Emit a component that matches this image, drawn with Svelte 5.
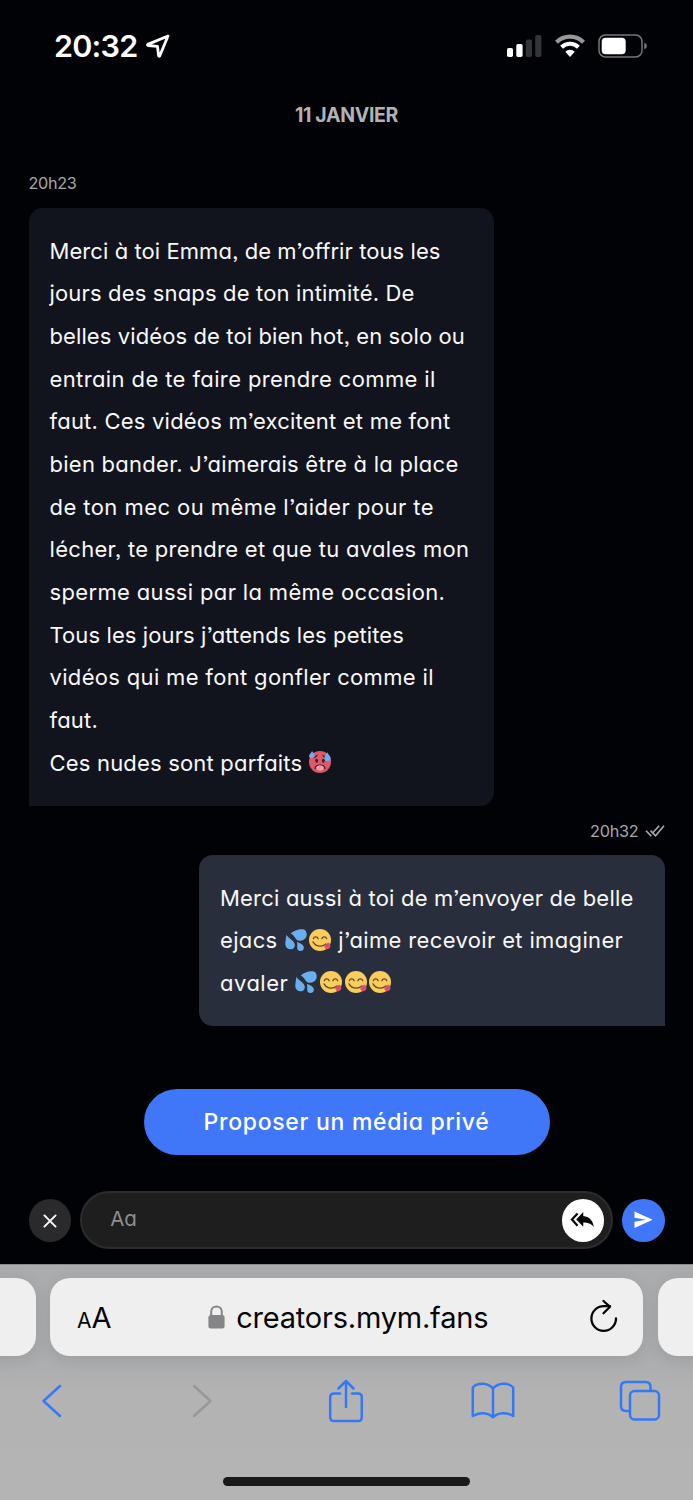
<script>
  const received = [
    [{ t: 'Merci à toi Emma, de m’offrir tous les', w: 391 }],
    [{ t: 'jours des snaps de ton intimité. De', w: 365 }],
    [{ t: 'belles vidéos de toi bien hot, en solo ou', w: 415.5 }],
    [{ t: 'entrain de te faire prendre comme il', w: 386.3 }],
    [{ t: 'faut. Ces vidéos m’excitent et me font', w: 400.8 }],
    [{ t: 'bien bander. J’aimerais être à la place', w: 409 }],
    [{ t: 'de ton mec ou même l’aider pour te', w: 384.5 }],
    [{ t: 'lécher, te prendre et que tu avales mon', w: 419.8 }],
    [{ t: 'sperme aussi par la même occasion.', w: 395.8 }],
    [{ t: 'Tous les jours j’attends les petites', w: 354.5 }],
    [{ t: 'vidéos qui me font gonfler comme il', w: 384.3 }],
    [{ t: 'faut.', w: 48.5 }],
    [{ t: 'Ces nudes sont parfaits', w: 252.8 }, { e: ['hot'] }]
  ];

  const sent = [
    [{ t: 'Merci aussi à toi de m’envoyer de belle', w: 413.5 }],
    [{ t: 'ejacs', w: 57.5 }, { e: ['drops', 'yum'] }, { t: 'j’aime recevoir et imaginer', w: 285 }],
    [{ t: 'avaler', w: 68.3 }, { e: ['drops', 'yum', 'yum', 'yum'] }]
  ];

  // Spreads the tracking so that a run of text takes the given width.
  function fit(node, width) {
    const apply = () => {
      node.style.letterSpacing = '0px';
      const natural = node.getBoundingClientRect().width;
      node.style.letterSpacing = (width - natural) / node.textContent.length + 'px';
    };
    apply();
    document.fonts?.ready.then(apply);
  }
</script>

{#snippet emoji(kind)}
  <svg class="emoji" viewBox="0 0 36 36" aria-hidden="true">
    {#if kind === 'yum'}
      <circle cx="18" cy="18" r="18" fill="#f9cd5c" />
      <path d="M7 16c1.500-4 6.500-4 8 0M21 16c1.500-4 6.500-4 8 0M6.500 21c5 8.500 15 9 21 3.500" fill="none" stroke="#66471b" stroke-width="2" stroke-linecap="round" />
      <path d="M24.500 26.500l7-4.500c4 2 5 7 1.500 10-3 2.600-7.600 1.500-8.500-5.500z" fill="#dd5468" />
      <path d="M28 25l2.500 4" stroke="#b93c50" stroke-width="1.200" />
    {:else if kind === 'drops'}
      <path d="M9.500 7.500C14 2 24-.5 30 .5c5 1 7 8 4.500 13-3 6-11.500 7.500-16 3.500C15.500 14 14.500 9.500 9.500 7.500z" fill="#6aaeed" />
      <path d="M2.200 9.500c3.500 6 11.500 9 13.500 14.500 1.600 5-2 9.500-7 9.300C3 33 0 28.500.5 23c.4-4.500 1.200-8 1.700-13.500z" fill="#6aaeed" />
      <path d="M19.500 21c4 2.500 10.500 3.500 11.300 9 .5 3.500-2 6-5.300 6-4.500-.2-6-3.500-5.500-7.500.2-2.500.3-5-.5-7.500z" fill="#6aaeed" />
    {:else}
      <circle cx="18" cy="18" r="18" fill="#dc5969" />
      <path d="M8 11c2-1 4-2 5-4M28 11c-2-1-4-2-5-4" fill="none" stroke="#4b1624" stroke-width="2" stroke-linecap="round" />
      <ellipse cx="12.500" cy="16" rx="2.300" ry="3.300" fill="#4b1624" />
      <ellipse cx="23.500" cy="16" rx="2.300" ry="3.300" fill="#4b1624" />
      <path d="M10 29c0-8 16-8 16 0" fill="none" stroke="#4b1624" stroke-width="2" stroke-linecap="round" />
      <path d="M12 26.500c1.500-4.500 10.500-4.500 12 0v2.500c-2 4-10 4-12 0z" fill="#f2a0ae" />
      <path d="M18 25v4" stroke="#cc7385" stroke-width="1.200" />
      <path d="M5 0c3 4 5 6 4 9.500-2 3.500-8 3-9-.5C-.5 6 4 3 5 0zM30 2c-3 4-5 7-4.500 11 1.500 5.500 9 5 10 0 .5-4-3.500-6-5.500-11z" fill="#6aaeed" />
    {/if}
  </svg>
{/snippet}

{#snippet message(lines)}
  {#each lines as line}
    <p class="line">
      {#each line as part}
        {#if part.t}
          <span class="run" use:fit={part.w}>{part.t}</span>
        {:else}
          <span class="emojis">{#each part.e as kind}{@render emoji(kind)}{/each}</span>
        {/if}
      {/each}
    </p>
  {/each}
{/snippet}

<div class="phone">
  <header class="status">
    <div class="clock">
      <span class="run" use:fit={83.500}>20:32</span>
      <svg width="24" height="24" viewBox="0 0 24 24" fill="none" stroke="#fff" stroke-width="2.800" stroke-linejoin="round"><path d="M22 2L1.800 10.400q-.8.900.4 1.100l9.300.8 1.100 9.500q.4 1 1.200 0z" /></svg>
    </div>
    <div class="signals">
      <svg width="36" height="24" viewBox="0 0 36 24">
        <rect x="0" y="14" width="6" height="9" rx="1.700" fill="#fff" />
        <rect x="9.300" y="10" width="6.300" height="13" rx="1.700" fill="#fff" />
        <rect x="18.800" y="5.500" width="6.200" height="17.500" rx="1.700" fill="#343438" />
        <rect x="28.200" y="1" width="6.200" height="22" rx="1.700" fill="#343438" />
      </svg>
      <svg class="wifi" width="30" height="24" viewBox="0 0 30 24" fill="none">
        <path d="M1.500 8.200a19 19 0 0 1 27 0" stroke="#98989b" stroke-width="4.200" />
        <path d="M6.600 13.300a12 12 0 0 1 16.800 0" stroke="#fff" stroke-width="4" />
        <path d="M10.300 17.700a6.800 6.800 0 0 1 9.400 0L15 23z" fill="#fff" />
      </svg>
      <svg class="battery" width="50" height="24" viewBox="0 0 50 24">
        <rect x="1" y="1" width="43" height="22" rx="6.500" fill="none" stroke="#77777a" stroke-width="1.500" />
        <rect x="3.700" y="3.700" width="24" height="16.600" rx="4" fill="#fff" />
        <path d="M46.300 8.500q2.600 1 2.600 3.500t-2.600 3.500z" fill="#77777a" />
      </svg>
    </div>
  </header>

  <main class="chat">
    <h1 class="day"><span class="run" use:fit={103}>11 JANVIER</span></h1>

    <div class="stamp first"><span class="run" use:fit={48}>20h23</span></div>
    <section class="bubble incoming">{@render message(received)}</section>

    <div class="stamp own">
      <span class="run" use:fit={48.500}>20h32</span>
      <svg width="20" height="14" viewBox="0 0 20 14" fill="none" stroke="#a9a9ab" stroke-width="1.600"><path d="M1 6.800l5.300 5.300M5.500 6.600l5 5.200L19 1.800M8 8.500L14.200 1.800" /></svg>
    </div>
    <section class="bubble outgoing">{@render message(sent)}</section>

    <button class="offer"><span class="run" use:fit={286}>Proposer un média privé</span></button>

    <form class="composer">
      <button class="round close" type="button" aria-label="Fermer">
        <svg width="14" height="14" viewBox="0 0 14 14" stroke="#fff" stroke-width="1.900" stroke-linecap="round"><path d="M1.400 1.400l11.200 11.200M12.600 1.400L1.400 12.600" /></svg>
      </button>
      <div class="field">
        <span class="run" use:fit={26.500}>Aa</span>
        <button class="round replies" type="button" aria-label="Réponses">
          <svg width="25" height="17" viewBox="0 0 26 18"><path d="M7.800 1.500L1.800 8l6 6.500" fill="none" stroke="#050505" stroke-width="2.300" /><path d="M13.800 0v4.300c6.300.7 10.200 4.500 11.200 11.500-3.100-3.800-6.400-4.800-11.200-4.800v4.500L6.300 8z" fill="#050505" /></svg>
        </button>
      </div>
      <button class="round send" type="button" aria-label="Envoyer">
        <svg width="19" height="18" viewBox="0 0 19 18"><path d="M.5.500L18.700 8.700.5 17v-6.300l11.500-2L.5 6.700z" fill="#fff" /></svg>
      </button>
    </form>
  </main>

  <footer class="browser">
    <div class="tabs">
      <div class="tab side"></div>
      <div class="tab address">
        <span class="size"><span class="small">A</span><span>A</span></span>
        <div class="site">
          <svg width="17" height="24" viewBox="0 0 17 24"><path d="M3.200 11V6.700c0-7 10.600-7 10.600 0V11" fill="none" stroke="#858489" stroke-width="2" /><rect x=".4" y="10" width="16.200" height="13.500" rx="2.500" fill="#858489" /></svg>
          <span class="run" use:fit={252}>creators.mym.fans</span>
        </div>
        <svg class="reload" width="30" height="34" viewBox="0 0 30 34" fill="none" stroke="#050505" stroke-width="2.300" stroke-linecap="round" stroke-linejoin="round"><path d="M27 19.500A12.300 12.300 0 1 1 14.700 7.200H21M14.500 2l6.500 5.800-6.500 6.400" /></svg>
      </div>
      <div class="tab side"></div>
    </div>
    <nav class="tools">
      <span class="tool"><svg width="22" height="34" viewBox="0 0 22 34"><path d="M19 2L2.500 17 19 32" /></svg></span>
      <span class="tool forward"><svg width="22" height="34" viewBox="0 0 22 34"><path d="M3 2l16.500 15L3 32" /></svg></span>
      <span class="tool"><svg width="36" height="44" viewBox="0 0 36 44"><path d="M12 14.500H6q-3.800 0-3.800 3.800v20q0 3.800 3.800 3.800h24q3.800 0 3.800-3.800v-20q0-3.800-3.800-3.800h-6M18 28V2.500M10.500 9.500L18 2l7.500 7.500" /></svg></span>
      <span class="tool"><svg width="44" height="38" viewBox="0 0 44 38"><path d="M22 6.500C17 .5 6.500.3 1.800 5.500V34c6-4 15-4 20.200 1.300C27.200 30 36 30 42.200 34V5.500C37.500.3 27 .5 22 6.500zV35" /></svg></span>
      <span class="tool"><svg width="42" height="42" viewBox="0 0 42 42"><rect x="11" y="11" width="29" height="28.500" rx="4.500" /><path d="M10.500 31H7q-5 0-5-5V7q0-5 5-5h19.500q5 0 5 5v3.500" /></svg></span>
    </nav>
    <div class="home"></div>
  </footer>
</div>

<style>
  :global(body) { margin: 0; background: #010206; }
  * { box-sizing: border-box; }
  .phone {
    width: 693px; height: 1500px; overflow: hidden;
    display: flex; flex-direction: column;
    background: #010206; color: #f8f8f9;
    font-family: Inter, "Open Sans", sans-serif;
  }
  svg { display: block; flex: none; }
  button { border: 0; padding: 0; font: inherit; color: inherit; }
  .run { display: inline-block; flex: none; white-space: pre; }

  .status { height: 92px; display: flex; justify-content: space-between; align-items: center; padding: 0 45.300px 0 54px; }
  .clock { display: flex; align-items: center; gap: 8px; font-size: 30.500px; font-weight: 600; color: #fff; }
  .clock .run { margin-bottom: 2px; }
  .signals { display: flex; align-items: center; }
  .wifi { margin-left: 12px; }
  .battery { margin-left: 13px; }

  .chat { height: 1171.500px; padding: 0 28.500px; display: flex; flex-direction: column; font-feature-settings: "cv11", "ss03"; }
  .day { margin: 7.500px 0 0; height: 30px; line-height: 30px; text-align: center; font-size: 19.500px; font-weight: 700; color: #b2b2b3; }
  .stamp { height: 24px; line-height: 24px; display: flex; align-items: center; font-size: 16.200px; color: #a9a9ab; }
  .first { margin: 41.500px 0 13.400px; }
  .own { justify-content: flex-end; gap: 6px; margin: 13px 0 12.800px; }
  .bubble { width: 465.500px; padding: 21.300px 20.500px; font-size: 22px; }
  .incoming { background: #12141d; border-radius: 14px 14px 14px 0; }
  .outgoing { align-self: flex-end; background: #292e3c; border-radius: 14px 14px 0 14px; }
  .line { margin: 0 0 0 .5px; height: 42.660px; line-height: 42.660px; display: flex; align-items: center; gap: 5.700px; }
  .emojis { display: flex; align-items: center; }
  .emoji { width: 22px; height: 22px; margin: 0 1.350px 2px; overflow: visible; }

  .offer { align-self: center; margin-top: 63.500px; width: 406px; height: 65.700px; border-radius: 33px; background: #4077f9; color: #fff; font-size: 23px; font-weight: 500; }
  .composer { margin-top: 35.500px; display: flex; align-items: center; gap: 9px; }
  .round { width: 42.700px; height: 42.700px; border-radius: 50%; display: flex; align-items: center; justify-content: center; flex: none; }
  .close { background: #2a2a2c; margin-top: 2px; }
  .field { flex: 1; height: 58.500px; border: 2px solid #2c2c2e; border-radius: 30px; background: #1e1e1e; padding: 0 6.500px 0 28px; display: flex; justify-content: space-between; align-items: center; font-size: 20.500px; color: #8e8e90; }
  .field .run { margin-bottom: 2px; }
  .replies { background: #fff; margin-top: 1px; }
  .send { background: #4077f9; margin-top: 1px; }

  .browser { flex: 1; background: linear-gradient(#abacad 0, #abacad 90px, #b3b3b4 130px, #b4b4b4); border-top: 1px solid #8b8b8d; color: #050505; display: flex; flex-direction: column; }
  .tabs { display: flex; justify-content: center; gap: 14.500px; margin-top: 13.500px; }
  .tab { height: 78px; border-radius: 20px; background: #efefef; flex: none; box-shadow: 0 3px 16px rgba(0, 0, 0, .09); }
  .side { width: 593px; }
  .address { width: 593px; padding: 0 24px 0 27px; display: flex; align-items: center; justify-content: space-between; font-size: 29px; }
  .size { display: flex; align-items: baseline; margin-top: 1px; width: 34px; }
  .small { font-size: 21px; }
  .site { display: flex; align-items: center; gap: 11px; margin-right: 3.500px; }
  .reload { margin-bottom: 2px; }
  .tools { height: 50px; margin: 20px 29px 0 28px; display: flex; align-items: center; justify-content: space-between; }
  .tool { width: 48px; display: flex; justify-content: center; }
  .forward { padding-left: 6px; }
  .tool svg { fill: none; stroke: #3478f6; stroke-width: 2.500; stroke-linecap: round; stroke-linejoin: round; }
  .forward svg { stroke: #98989a; }
  .home { width: 247px; height: 9px; margin: 50.500px auto 0; border-radius: 5px; background: #191919; }
</style>
